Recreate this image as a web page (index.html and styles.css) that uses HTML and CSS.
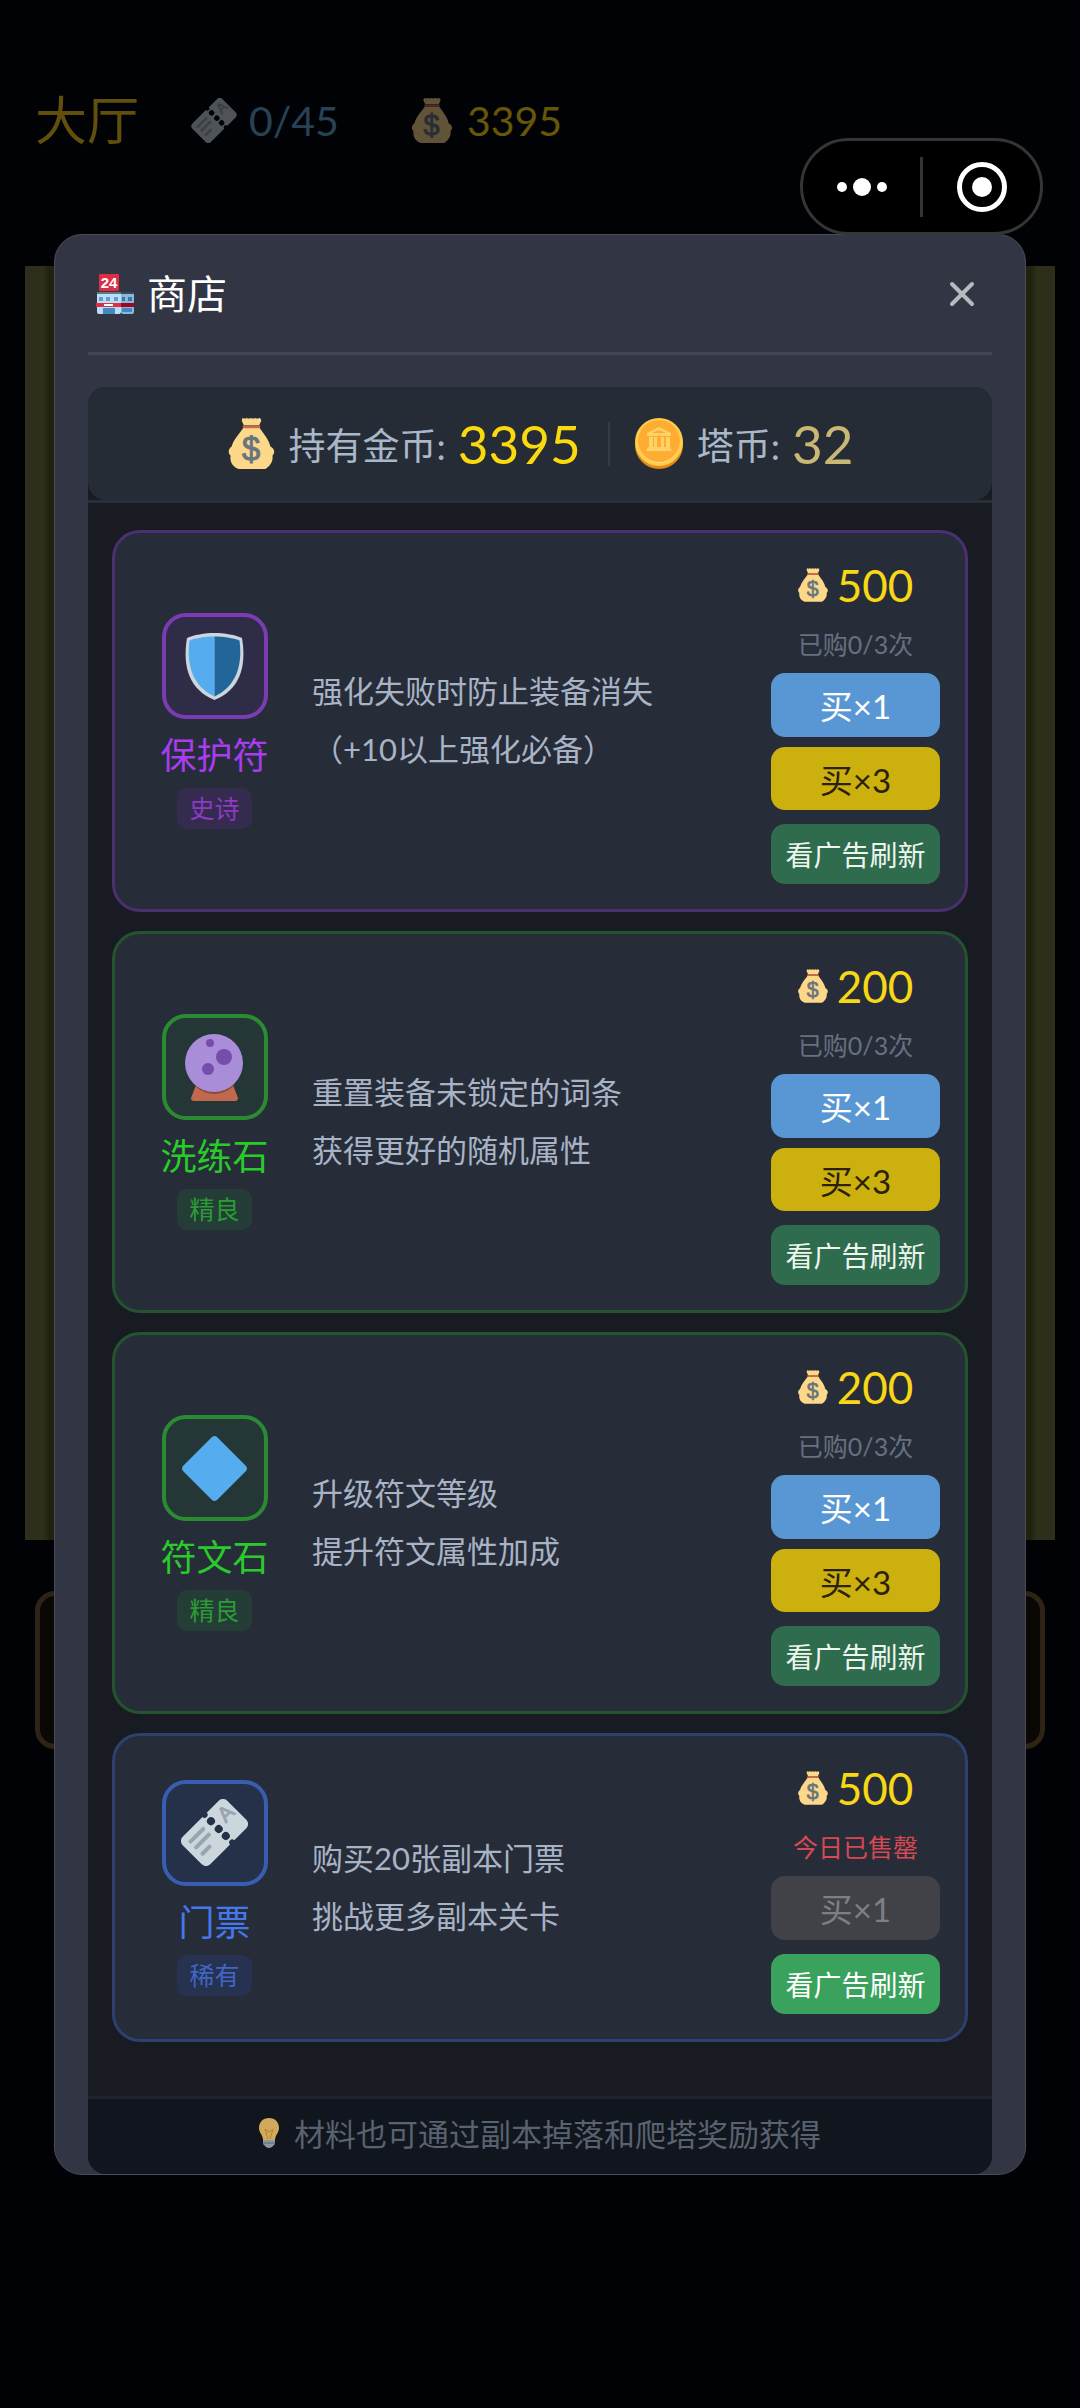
FILE: index.html
```html
<!DOCTYPE html>
<html lang="zh-CN">
  <head>
    <meta charset="UTF-8" />
    <meta name="viewport" content="width=device-width, initial-scale=1.0" />
    <title>商店</title>
    <link rel="stylesheet" href="styles.css">
  </head>
  <body>
    <!-- shared icons -->
    <svg class="sprite" aria-hidden="true">
      <symbol id="icon-bag" viewBox="0 0 45 50">
        <path fill="#fdd888" d="M14 0q2 1 4 0 2 1 4 0 2 1 4 0 2 1 4 0 2 0 2 3l-2 4H15l-2-4q0-3 1-3z" />
        <path fill="#fdd888" d="M15 9h15c5 7 10 13 11 19 4 2 5 6 2 9 1 5-2 10-7 13H10c-6-2-9-7-8-13-3-3-2-7 1-9 2-7 7-12 12-19z" />
        <rect fill="#bf6d4e" x="14" y="7" width="17" height="3" rx="1" />
        <text x="22" y="41" font-size="32" text-anchor="middle" fill="#67757f" stroke="#67757f">$</text>
      </symbol>
      <symbol id="icon-ticket" viewBox="0 0 67 67">
        <g transform="rotate(-45 33.5 33.5)">
          <path fill="#ccd6dd" fill-rule="evenodd" d="M8 14h28a3 3 0 0 0 6 0h17a6 6 0 0 1 6 6v27a6 6 0 0 1-6 6H42a3 3 0 0 0-6 0H8a6 6 0 0 1-6-6V20a6 6 0 0 1 6-6zM35 23a4 4 0 1 0 8 0 4 4 0 1 0-8 0zM35 34a4 4 0 1 0 8 0 4 4 0 1 0-8 0zM35 44a4 4 0 1 0 8 0 4 4 0 1 0-8 0z" />
          <path stroke="#99a5ad" stroke-width="4" stroke-linecap="round" d="M10 23h18M10 31h18M10 40h10" />
          <text x="55" y="35" font-size="21" text-anchor="middle" fill="#99a5ad" stroke="#99a5ad">A</text>
        </g>
      </symbol>
    </svg>

    <div class="screen">
      <div class="lobby">
        <header class="lobby-bar">
          <span class="lobby-title">大厅</span>
          <span class="lobby-stat tickets"><svg class="stat-icon"><use href="#icon-ticket" /></svg>0/45</span>
          <span class="lobby-stat gold"><svg class="stat-icon"><use href="#icon-bag" /></svg>3395</span>
        </header>
        <div class="lobby-scene"></div>
        <div class="lobby-panel"></div>
      </div>

      <div class="overlay">
        <section class="modal" role="dialog" aria-labelledby="shop-title">
          <header class="modal-head">
            <svg class="store-icon" viewBox="0 0 38 40">
              <rect x="3" width="20" height="17" rx="1" fill="#dd2e44" />
              <text x="13" y="14" font-size="15" font-weight="bold" text-anchor="middle" fill="#fff">24</text>
              <rect x="1" y="18" width="24" height="22" rx="2" fill="#bbddf5" />
              <rect x="25" y="18" width="13" height="22" rx="2" fill="#88b8dc" />
              <path fill="#66757f" d="M1 18h24v2H1z" />
              <path fill="#404a55" d="M25 18h13v2H25z" />
              <path fill="#5a9fd4" d="M3 23h4v4H3zM10 23h4v4h-4zM18 23h4v4h-4z" />
              <path fill="#3b78ab" d="M26 23h3v4h-3zM32 23h4v4h-4z" />
              <path fill="#dd2e44" d="M0 29h25v4H0z" />
              <path fill="#a0041e" d="M25 29h13v4H25z" />
              <path fill="#fff" d="M8 30h9v2H8z" />
              <path fill="#4289c1" d="M7 34h12v6H7zM26 34h10v4H26z" />
            </svg>
            <h1 class="modal-title" id="shop-title">商店</h1>
            <button class="close-btn" type="button" aria-label="关闭">
              <svg viewBox="0 0 26 26"><path d="M3 3l20 20M23 3L3 23" /></svg>
            </button>
          </header>

          <div class="shop">
            <div class="wallet-wrap">
              <div class="wallet">
                <svg class="wallet-icon bag"><use href="#icon-bag" /></svg>
                <span class="wallet-label">持有金币:</span>
                <span class="wallet-value">3395</span>
                <span class="wallet-split"></span>
                <svg class="wallet-icon coin" viewBox="0 0 49 51">
                  <ellipse cx="24" cy="27" rx="24" ry="24" fill="#e58a16" />
                  <ellipse cx="24" cy="24" rx="24" ry="24" fill="#ffcc4d" />
                  <ellipse cx="24" cy="24" rx="21" ry="21" fill="#ffe08a" />
                  <ellipse cx="24" cy="23" rx="21" ry="21" fill="#ffac33" />
                  <path fill="#ffd268" d="M24 9l12 6v3H12v-3zM14 19h4v10h-4zM19 19h3v10h-3zM26 19h3v10h-3zM31 19h4v10h-4zM13 29h22l2 4H11z" />
                  <path fill="#ffac33" d="M24 12l7 3H17z" />
                </svg>
                <span class="wallet-label">塔币:</span>
                <span class="wallet-value tower">32</span>
              </div>
            </div>

            <div class="goods">
              <article class="card epic">
                <div class="item">
                  <div class="item-icon">
                    <svg viewBox="0 0 67 67">
                      <path fill="#ccd6dd" d="M33.500 0C24 0 12 2 6 5 1 35 9 57 33.500 67 58 57 66 35 61 5 55 2 43 0 33.500 0z" />
                      <path fill="#55acee" d="M33.500 3.500C25 3.500 15 5 8.500 7.500 5 34 13 54 33.500 63.500z" />
                      <path fill="#226699" d="M33.500 3.500C42 3.500 52 5 58.500 7.500 62 34 54 54 33.500 63.500z" />
                    </svg>
                  </div>
                  <h2 class="item-name">保护符</h2>
                  <span class="item-rank">史诗</span>
                </div>
                <p class="desc">强化失败时防止装备消失<br>（+10以上强化必备）</p>
                <div class="buy">
                  <div class="price"><svg><use href="#icon-bag" /></svg>500</div>
                  <div class="stock">已购0/3次</div>
                  <button class="btn one" type="button">买×1</button>
                  <button class="btn three" type="button">买×3</button>
                  <button class="btn ad dim" type="button">看广告刷新</button>
                </div>
              </article>

              <article class="card fine">
                <div class="item">
                  <div class="item-icon">
                    <svg viewBox="0 0 67 67">
                      <path fill="#c1694f" d="M15 51h37l5 13q0 3-3 3H13q-3 0-3-3z" />
                      <path fill="#8a4b38" d="M14 52q19 16 39 0l-1-3H15z" />
                      <circle cx="33" cy="29" r="29" fill="#aa8dd8" />
                      <circle cx="29" cy="9" r="4" fill="#744eaa" />
                      <circle cx="43" cy="23" r="8" fill="#744eaa" />
                      <circle cx="27" cy="35" r="6" fill="#744eaa" />
                    </svg>
                  </div>
                  <h2 class="item-name">洗练石</h2>
                  <span class="item-rank">精良</span>
                </div>
                <p class="desc">重置装备未锁定的词条<br>获得更好的随机属性</p>
                <div class="buy">
                  <div class="price"><svg><use href="#icon-bag" /></svg>200</div>
                  <div class="stock">已购0/3次</div>
                  <button class="btn one" type="button">买×1</button>
                  <button class="btn three" type="button">买×3</button>
                  <button class="btn ad dim" type="button">看广告刷新</button>
                </div>
              </article>

              <article class="card fine">
                <div class="item">
                  <div class="item-icon">
                    <svg viewBox="0 0 67 67">
                      <path fill="#55acee" d="M31 2q2.500-2 5 0l29 29q2 2.500 0 5L36 65q-2.500 2-5 0L2 36q-2-2.500 0-5z" />
                    </svg>
                  </div>
                  <h2 class="item-name">符文石</h2>
                  <span class="item-rank">精良</span>
                </div>
                <p class="desc">升级符文等级<br>提升符文属性加成</p>
                <div class="buy">
                  <div class="price"><svg><use href="#icon-bag" /></svg>200</div>
                  <div class="stock">已购0/3次</div>
                  <button class="btn one" type="button">买×1</button>
                  <button class="btn three" type="button">买×3</button>
                  <button class="btn ad dim" type="button">看广告刷新</button>
                </div>
              </article>

              <article class="card rare">
                <div class="item">
                  <div class="item-icon">
                    <svg><use href="#icon-ticket" /></svg>
                  </div>
                  <h2 class="item-name">门票</h2>
                  <span class="item-rank">稀有</span>
                </div>
                <p class="desc">购买20张副本门票<br>挑战更多副本关卡</p>
                <div class="buy">
                  <div class="price"><svg><use href="#icon-bag" /></svg>500</div>
                  <div class="stock sold-out">今日已售罄</div>
                  <button class="btn one" type="button" disabled>买×1</button>
                  <button class="btn ad" type="button">看广告刷新</button>
                </div>
              </article>
            </div>

            <footer class="tip">
              <svg class="bulb" viewBox="0 0 20 30">
                <path fill="#d0a95a" d="M10 0C4 0 0 4 0 10c0 5 4 7 4 12h12c0-5 4-7 4-12 0-6-4-10-10-10z" />
                <path fill="none" stroke="#b5852f" d="M9 21L6 11l4 3 4-3-3 10" />
                <path fill="#8b969e" d="M4 22h12v4l-3 3q-3 2-6 0l-3-3z" />
                <path stroke="#5d6870" d="M4 25h12" />
              </svg>
              <span>材料也可通过副本掉落和爬塔奖励获得</span>
            </footer>
          </div>
        </section>
      </div>

      <div class="capsule">
        <button class="capsule-btn" type="button" aria-label="更多">
          <svg width="50" height="50" viewBox="0 0 50 50">
            <circle cx="5" cy="25" r="5" />
            <circle cx="25" cy="25" r="9" />
            <circle cx="45" cy="25" r="5" />
          </svg>
        </button>
        <span class="capsule-line"></span>
        <button class="capsule-btn" type="button" aria-label="退出">
          <svg width="50" height="50" viewBox="0 0 50 50">
            <circle cx="25" cy="25" r="22.500" fill="none" stroke="#fff" stroke-width="5" />
            <circle cx="25" cy="25" r="10" />
          </svg>
        </button>
      </div>
    </div>
  </body>
</html>
```
FILE: styles.css
```css
* {
  box-sizing: border-box;
}

body {
  margin: 0;
  background: #010205;
  color: #fff;
  font-family: Lato, "Noto Sans CJK SC", sans-serif;
}

h1,
h2,
p {
  margin: 0;
  font-weight: 400;
}

button {
  padding: 0;
  border: 0;
  font-family: inherit;
  cursor: pointer;
}

svg {
  display: block;
  flex: none;
}

svg text {
  font-family: "Liberation Sans", sans-serif;
}

.sprite {
  display: none;
}

/* lobby and overlay share one cell */
.screen {
  position: relative;
  display: grid;
  min-height: 100vh;
}

.lobby,
.overlay {
  grid-area: 1 / 1;
}

/* lobby behind the shop */
.lobby {
  padding-top: 84px;
}

.lobby-bar {
  display: flex;
  align-items: center;
  height: 72px;
  padding-left: 35px;
}

.lobby-title {
  padding-bottom: 6px;
  font-size: 52px;
  color: #61500c;
}

.lobby-stat {
  display: flex;
  align-items: center;
  gap: 12px;
  font-size: 41px;
}

.lobby-stat .stat-icon {
  width: 46px;
  height: 45px;
  opacity: 0.38;
}

.tickets {
  margin-left: 52px;
  color: #274257;
}

.gold {
  margin-left: 70px;
  color: #665608;
}

.lobby-scene {
  height: 1274px;
  margin: 110px 25px 0;
  background: linear-gradient(90deg, #2e2f1a 18px, #212310 24px, #212310 calc(100% - 24px), #2e2f1a calc(100% - 18px));
}

.lobby-panel {
  height: 158px;
  margin: 51px 35px 0;
  border: 5px solid #2e2415;
  border-radius: 20px;
  background: #0b0704;
}

/* shop dialog */
.overlay {
  position: relative;
  padding: 234px 5vw 100px;
}

.modal {
  padding: 0 33px;
  border: 1px solid #4a4b54;
  border-radius: 28px;
  background: #323644;
}

.modal-head {
  display: flex;
  align-items: center;
  height: 120px;
  padding: 0 17px 0 8px;
  border-bottom: 3px solid #434755;
}

.store-icon {
  width: 38px;
  height: 40px;
}

.modal-title {
  flex: 1;
  margin-left: 13px;
  padding-bottom: 4px;
  font-size: 40px;
}

.close-btn {
  background: none;
}

.close-btn svg {
  width: 26px;
  height: 26px;
  fill: none;
  stroke: #b7b9be;
  stroke-width: 4;
  stroke-linecap: round;
}

.shop {
  margin-top: 32px;
  overflow: hidden;
  border-radius: 18px;
  background: #181c22;
}

.wallet-wrap {
  border-bottom: 3px solid #292f3a;
}

.wallet {
  display: flex;
  align-items: center;
  justify-content: center;
  height: 113px;
  border-radius: 18px;
  background: #252c36;
}

.wallet-icon {
  width: 49px;
  height: 51px;
}

.wallet-label {
  margin: 0 12px 0 13px;
  font-size: 37px;
  color: #a9b7ca;
}

.wallet-value {
  font-size: 53px;
  color: #fbd90f;
}

.wallet-value.tower {
  color: #c9b775;
}

.wallet-split {
  width: 2px;
  height: 44px;
  margin: 0 25px 0 27px;
  background: #343b46;
}

.goods {
  display: flex;
  flex-direction: column;
  gap: 19px;
  padding: 27px 24px 54px;
}

.card {
  display: flex;
  align-items: center;
  padding: 25px;
  border: 3px solid;
  border-radius: 28px;
  background: #262d39;
}

.epic {
  border-color: #4b3070;
}

.fine {
  border-color: #24532f;
}

.rare {
  border-color: #2d406f;
}

.item {
  display: flex;
  flex-direction: column;
  align-items: center;
  width: 149px;
}

.item-icon {
  display: flex;
  align-items: center;
  justify-content: center;
  width: 106px;
  height: 106px;
  border: 4px solid;
  border-radius: 24px;
}

.item-icon svg {
  width: 67px;
  height: 67px;
}

.item-name {
  margin-top: 10px;
  font-size: 36px;
  line-height: 52px;
}

.item-rank {
  margin-top: 7px;
  padding: 0 12px;
  border-radius: 10px;
  font-size: 25px;
  line-height: 41px;
}

.epic .item-icon {
  border-color: #7b3bb2;
  background: #2f2c47;
}

.epic .item-name {
  color: #a73cf0;
}

.epic .item-rank {
  background: #352b4e;
  color: #8c39c6;
}

.fine .item-icon {
  border-color: #2b8b33;
  background: #253637;
}

.fine .item-name {
  color: #29cb2a;
}

.fine .item-rank {
  background: #253d37;
  color: #2a9c34;
}

.rare .item-icon {
  border-color: #385db2;
  background: #253149;
}

.rare .item-name {
  color: #4577ee;
}

.rare .item-rank {
  background: #263250;
  color: #4066c4;
}

.desc {
  flex: 1;
  margin-left: 23px;
  padding-bottom: 2px;
  font-size: 31px;
  line-height: 58px;
  color: #a9b3c6;
}

.buy {
  display: flex;
  flex-direction: column;
  width: 169px;
}

.price {
  display: flex;
  align-items: center;
  justify-content: center;
  gap: 9px;
  font-size: 44px;
  line-height: 54px;
  color: #f7d716;
}

.price svg {
  width: 30px;
  height: 34px;
}

.stock {
  margin: 16px 0 13px;
  font-size: 25px;
  line-height: 32px;
  text-align: center;
  color: #667080;
}

.stock.sold-out {
  color: #d84852;
}

.btn {
  height: 64px;
  border-radius: 14px;
  font-size: 33px;
  color: #fff;
}

.btn.one {
  background: #5897d4;
}

.btn.three {
  height: 63px;
  margin-top: 10px;
  background: #ccb00d;
  color: #2a2108;
}

.btn.one:disabled {
  background: #414247;
  color: #7d7f84;
  cursor: default;
}

.btn.ad {
  height: 60px;
  margin-top: 14px;
  background: #3aa25d;
  font-size: 28px;
}

.btn.ad.dim {
  background: #2f6c4d;
  color: #edf5ef;
}

.tip {
  display: flex;
  align-items: center;
  justify-content: center;
  gap: 15px;
  height: 78px;
  padding-bottom: 8px;
  border-top: 3px solid #1f232c;
  background: #11151d;
  font-size: 31px;
  color: #596270;
}

.bulb {
  width: 20px;
  height: 30px;
}

/* mini-program capsule floats over everything */
.capsule {
  position: absolute;
  top: 138px;
  right: 37px;
  display: flex;
  align-items: center;
  width: 243px;
  height: 97px;
  border: 3px solid #353537;
  border-radius: 49px;
  background: #000;
}

.capsule-btn {
  display: flex;
  flex: 1;
  justify-content: center;
  background: none;
}

.capsule-btn svg {
  fill: #fff;
}

.capsule-line {
  width: 3px;
  height: 60px;
  background: #353537;
}
```
